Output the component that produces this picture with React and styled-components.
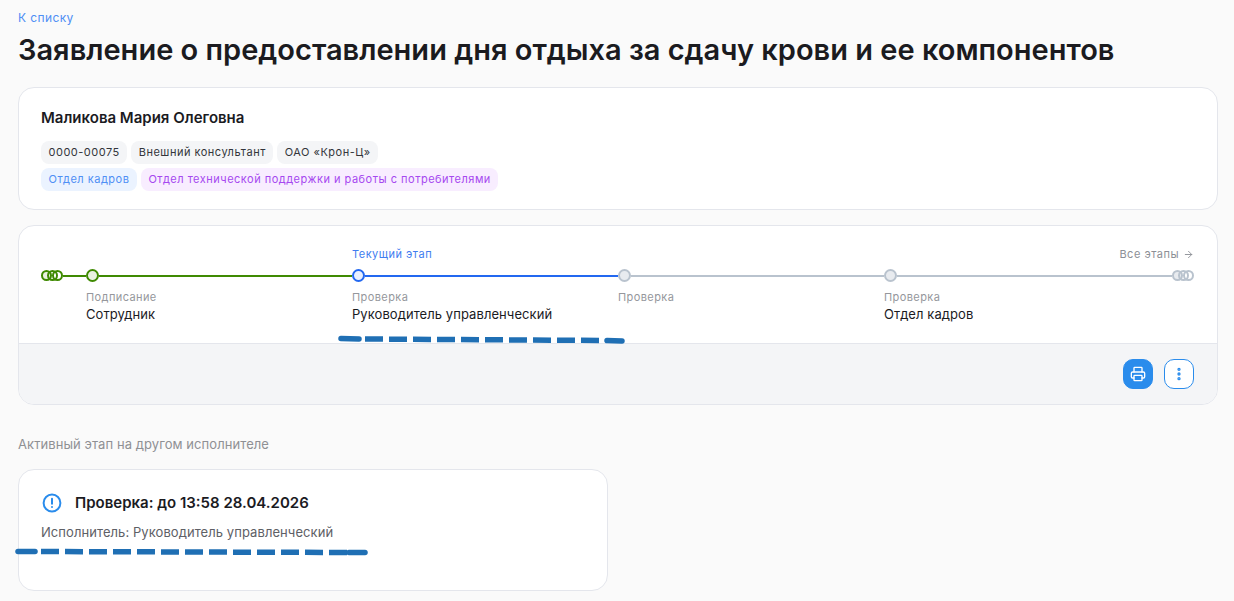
import styled, { createGlobalStyle } from "styled-components";
import { LuPrinter, LuEllipsisVertical, LuArrowRight } from "react-icons/lu";

const GlobalStyle = createGlobalStyle`
    html, body {
        margin: 0;
        padding: 0;
        background: #fafafa;
        font-family: Inter, "Noto Sans", sans-serif;
        color: #1b1b1f;
    }
`;

const Page = styled.div`
    position: relative;
    height: 601px;
    overflow: hidden;
    padding: 10px 16px 0 18px;
    box-sizing: border-box;
`;

const BackLink = styled.a`
    display: block;
    font-size: 12px;
    line-height: 16px;
    letter-spacing: 0.4px;
    color: #4f8ff5;
`;

const Title = styled.h1`
    margin: 5px 0 19px;
    font-size: 29px;
    line-height: 37px;
    font-weight: 600;
    color: #1b1b1f;
`;

const Card = styled.section`
    background: #fff;
    border: 1px solid #e4e6ec;
    border-radius: 16px;
    box-sizing: border-box;
    overflow: hidden;
`;

const PersonCard = styled(Card)`
    height: 123px;
    padding: 21px 22px 0;
    margin-bottom: 15px;
`;

const Name = styled.div`
    font-size: 15px;
    line-height: 18px;
    font-weight: 600;
    margin-bottom: 14px;
`;

const TagRow = styled.div`
    display: flex;
    gap: 4px;
    margin-bottom: 4px;
`;

const tagColors = {
    gray: ["#f4f5f7", "#33353b"],
    blue: ["#ebf3ff", "#4f8ff5"],
    purple: ["#f8edff", "#a648f0"],
};

const Tag = styled.span`
    height: 23px;
    padding: 0 7.5px;
    border-radius: 8px;
    font-size: 11px;
    line-height: 23px;
    letter-spacing: 0.5px;
    background: ${(p) => tagColors[p.$tone][0]};
    color: ${(p) => tagColors[p.$tone][1]};
`;

const StageCard = styled(Card)`
    height: 180px;
    margin-bottom: 31px;
`;

const Timeline = styled.div`
    height: 117px;
    padding: 0 23px 0 22px;
    display: flex;
`;

const Lead = styled.div`
    width: 45px;
    flex: none;
    padding-top: 43px;
`;

const Step = styled.div`
    width: ${(p) => (p.$last ? "auto" : "266px")};
    flex: ${(p) => (p.$last ? "1" : "none")};
    padding-top: 20px;
`;

const TopRow = styled.div`
    height: 16px;
    margin-bottom: 7px;
    display: flex;
    justify-content: ${(p) => (p.$current ? "flex-start" : "flex-end")};
    align-items: center;
    gap: 4px;
    font-size: 11px;
    letter-spacing: 0.5px;
    color: ${(p) => (p.$current ? "#3f7df0" : "#8c8f96")};
`;

const Track = styled.div`
    height: 13px;
    display: flex;
    align-items: center;
`;

const stateColors = {
    done: ["#3f8a02", "#e9f1e1"],
    current: ["#2368f0", "#e9f0fe"],
    todo: ["#b9c3ce", "#e8ebef"],
};

const Node = styled.span`
    width: 13px;
    height: 13px;
    flex: none;
    position: relative;
    box-sizing: border-box;
    border-radius: 50%;
    border: 2px solid ${(p) => stateColors[p.$state][0]};
    background: ${(p) => stateColors[p.$state][1]};
`;

const Line = styled.span`
    flex: 1;
    height: 2px;
    background: ${(p) => stateColors[p.$state][0]};
`;

const Cluster = styled.span`
    display: flex;
    flex: none;
    ${Node} {
        width: 11px;
        height: 11px;
        background: transparent;
    }
    ${Node}:first-child {
        background: ${(p) => stateColors[p.$state][1]};
    }
    ${Node} + ${Node} {
        margin-left: -5.5px;
    }
`;

const StepKind = styled.div`
    margin-top: 7px;
    font-size: 11px;
    line-height: 16px;
    letter-spacing: 0.4px;
    color: #95979c;
`;

const StepOwner = styled.div`
    font-size: 13px;
    line-height: 18px;
    letter-spacing: 0.07px;
    color: #1b1b1f;
`;

const Footer = styled.div`
    height: 61px;
    background: #f4f5f7;
    border-top: 1px solid #e4e6ec;
    box-sizing: border-box;
    padding: 0 23px;
    display: flex;
    justify-content: flex-end;
    align-items: center;
    gap: 11px;
`;

const IconButton = styled.button`
    width: 30px;
    height: 30px;
    padding: 0;
    border-radius: 10px;
    display: flex;
    align-items: center;
    justify-content: center;
    box-sizing: border-box;
    border: 1px solid #2a8cec;
    background: ${(p) => (p.$filled ? "#2a8cec" : "#fff")};
    color: ${(p) => (p.$filled ? "#fff" : "#2a8cec")};
`;

const SectionLabel = styled.div`
    font-size: 13px;
    line-height: 16px;
    letter-spacing: 0.07px;
    color: #8f9094;
    margin-bottom: 17px;
`;

const TaskCard = styled(Card)`
    width: 590px;
    height: 122px;
    padding: 23px 22px 0;
`;

const TaskHead = styled.div`
    display: flex;
    align-items: center;
    gap: 13px;
    font-size: 15px;
    line-height: 20px;
    font-weight: 600;
`;

const TaskIcon = styled.svg`
    margin-left: 1px;
`;

const TaskText = styled.div`
    margin-top: 10px;
    font-size: 13px;
    line-height: 18px;
    letter-spacing: 0.07px;
    color: #5e6066;
`;

const Scribble = styled.svg`
    position: absolute;
    left: 0;
    top: 0;
    width: 1234px;
    height: 601px;
    pointer-events: none;
`;

const steps = [
    { kind: "Подписание", owner: "Сотрудник", state: "done" },
    { kind: "Проверка", owner: "Руководитель управленческий", state: "current", top: "Текущий этап" },
    { kind: "Проверка", owner: "", state: "todo" },
];

const AlertIcon = () => (
    <TaskIcon width="20" height="20" viewBox="0 0 20 20" fill="none" stroke="#2a8cec" strokeWidth="2" strokeLinecap="round">
        <circle cx="10" cy="10" r="8.4" />
        <path d="M10 5.8v5" />
        <path d="M10 14v.1" />
    </TaskIcon>
);

// one hand-drawn marker: rounded first and last strokes, dashes between them
const Marker = ({ x1, y1, x2, y2, x3, y3, x4, y4 }) => (
    <>
        <path d={`M${x1} ${y1} L${x2} ${y2}`} strokeLinecap="round" />
        <path d={`M${x2 + 6} ${y2} L${x3} ${y3}`} strokeDasharray="18 6" />
        <path d={`M${x3 + 2} ${y3} L${x4} ${y4}`} strokeLinecap="round" />
    </>
);

const App = () => (
    <Page>
        <GlobalStyle />
        <BackLink>К списку</BackLink>
        <Title>Заявление о предоставлении дня отдыха за сдачу крови и ее компонентов</Title>

        <PersonCard>
            <Name>Маликова Мария Олеговна</Name>
            <TagRow>
                <Tag $tone="gray">0000-00075</Tag>
                <Tag $tone="gray">Внешний консультант</Tag>
                <Tag $tone="gray">ОАО «Крон-Ц»</Tag>
            </TagRow>
            <TagRow>
                <Tag $tone="blue">Отдел кадров</Tag>
                <Tag $tone="purple">Отдел технической поддержки и работы с потребителями</Tag>
            </TagRow>
        </PersonCard>

        <StageCard>
            <Timeline>
                <Lead>
                    <Track>
                        <Cluster $state="done">
                            <Node $state="done" />
                            <Node $state="done" />
                            <Node $state="done" />
                        </Cluster>
                        <Line $state="done" />
                    </Track>
                </Lead>
                {steps.map((step, i) => (
                    <Step key={i}>
                        <TopRow $current>{step.top}</TopRow>
                        <Track>
                            <Node $state={step.state} />
                            <Line $state={step.state} />
                        </Track>
                        <StepKind>{step.kind}</StepKind>
                        <StepOwner>{step.owner}</StepOwner>
                    </Step>
                ))}
                <Step $last>
                    <TopRow>
                        Все этапы <LuArrowRight size={11} />
                    </TopRow>
                    <Track>
                        <Node $state="todo" />
                        <Line $state="todo" />
                        <Cluster $state="todo">
                            <Node $state="todo" />
                            <Node $state="todo" />
                            <Node $state="todo" />
                        </Cluster>
                    </Track>
                    <StepKind>Проверка</StepKind>
                    <StepOwner>Отдел кадров</StepOwner>
                </Step>
            </Timeline>
            <Footer>
                <IconButton $filled>
                    <LuPrinter size={16} />
                </IconButton>
                <IconButton>
                    <LuEllipsisVertical size={16} strokeWidth={3} />
                </IconButton>
            </Footer>
        </StageCard>

        <SectionLabel>Активный этап на другом исполнителе</SectionLabel>
        <TaskCard>
            <TaskHead>
                <AlertIcon />
                Проверка: до 13:58 28.04.2026
            </TaskHead>
            <TaskText>Исполнитель: Руководитель управленческий</TaskText>
        </TaskCard>

        {/* hand-drawn markers lying over the page */}
        <Scribble viewBox="0 0 1234 601" fill="none" stroke="#1f6fb4" strokeWidth="5.5">
            <Marker x1={341} y1={338.5} x2={359} y2={339} x3={605} y3={340.5} x4={622} y4={341} />
            <Marker x1={18} y1={551.5} x2={35} y2={551.5} x3={347} y3={552.5} x4={365} y4={552.5} />
        </Scribble>
    </Page>
);

export default App;
